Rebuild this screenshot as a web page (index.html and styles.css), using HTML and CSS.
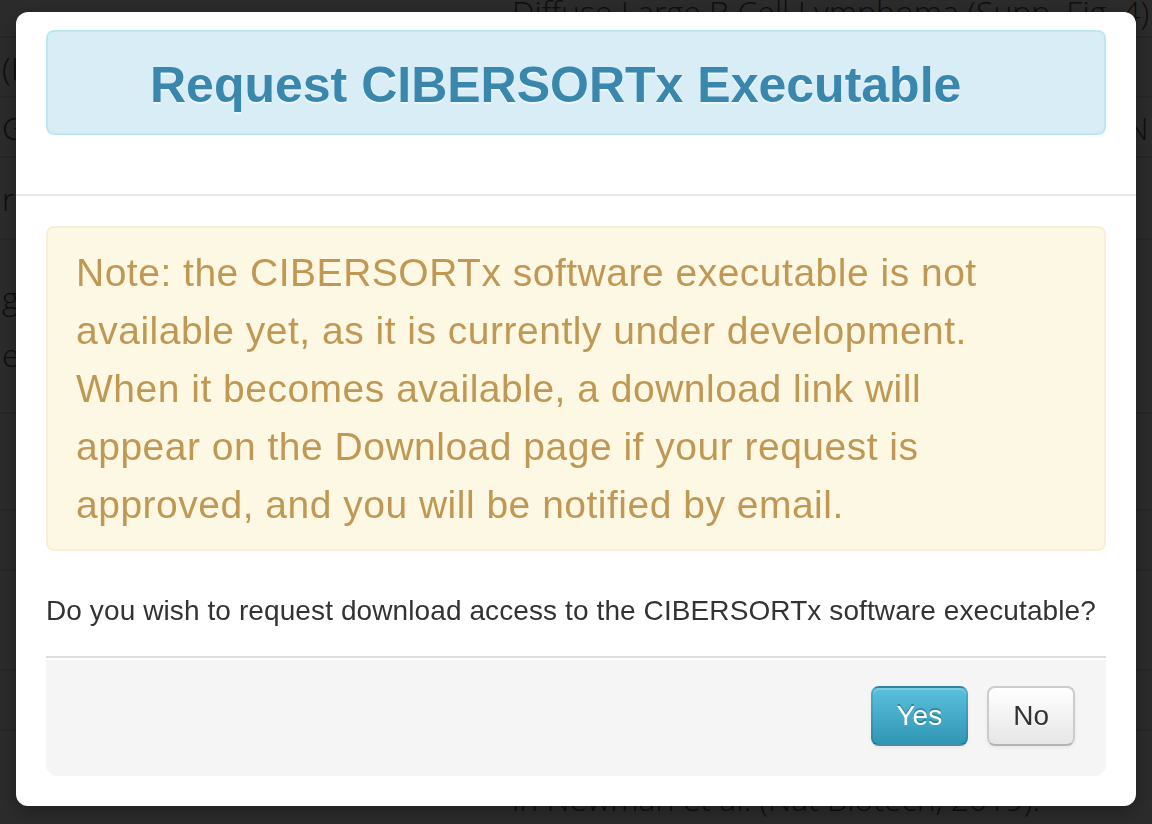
FILE: index.html
```html
<!DOCTYPE html>
<html lang="en">
<head>
<meta charset="utf-8">
<title>Request CIBERSORTx Executable</title>
<link rel="stylesheet" href="styles.css">
</head>
<body>
  <main class="page">
    <table class="sig-table">
      <tr class="r0"><td class="c-left"></td><td class="c-right">Diffuse Large B Cell Lymphoma (Supp. Fig. 4)</td></tr>
      <tr class="r1"><td class="c-left">(B cells)</td><td class="c-right">Purified B cells and T cells sorted from (l</td></tr>
      <tr class="r2"><td class="c-left">GEP</td><td class="c-right">Profiles of leukocyte subsets from tumors (N</td></tr>
      <tr class="r3"><td class="c-left">ribo</td><td class="c-right"></td></tr>
      <tr class="r4"><td class="c-left">grouped<br>expression</td><td class="c-right">Single cell RNA sequencing of melanoma tu<br>Bulk tissue samples with matched sorted n</td></tr>
      <tr class="r6"><td class="c-left">&nbsp;&nbsp;a</td><td class="c-right">Reference profiles of stromal cell types le</td></tr>
      <tr class="r7"><td class="c-left"></td><td class="c-right"></td></tr>
      <tr class="r8"><td class="c-left"></td><td class="c-right"></td></tr>
      <tr class="r9"><td class="c-left"></td><td class="c-right"></td></tr>
      <tr class="r11"><td class="c-left"></td><td class="c-right">in Newman et al. (Nat Biotech, 2019).</td></tr>
    </table>
  </main>

  <div class="backdrop"></div>

  <div class="modal" role="dialog" aria-labelledby="modal-title">
    <div class="modal-header">
      <div class="alert alert-info">
        <h1 id="modal-title" class="modal-title">Request CIBERSORTx Executable</h1>
      </div>
    </div>
    <div class="modal-body">
      <div class="alert alert-warning">
        Note: the CIBERSORTx software executable is not available yet, as it is currently under development. When it becomes available, a download link will appear on the Download page if your request is approved, and you will be notified by email.
      </div>
      <p class="question">Do you wish to request download access to the CIBERSORTx software executable?</p>
      <div class="modal-footer">
        <button class="btn btn-info" type="button">Yes</button>
        <button class="btn" type="button">No</button>
      </div>
    </div>
  </div>
</body>
</html>
```
FILE: styles.css
```css
html, body {
  margin: 0;
  padding: 0;
}

body {
  background: #ffffff;
  font-family: "Liberation Sans", Arial, Helvetica, sans-serif;
  color: #333333;
  width: 1152px;
  height: 824px;
  overflow: hidden;
}

/* ---------- page behind the dialog ---------- */
.page {
  font-family: "Open Sans", "Liberation Sans", sans-serif;
  font-weight: 300;
  color: #555555;
  height: 824px;
  overflow: hidden;
}

.sig-table {
  border-collapse: collapse;
  width: 1152px;
  margin-top: -14px;
  font-size: 32px;
}

.sig-table td {
  border-bottom: 2px solid #dddddd;
  padding: 0;
  white-space: nowrap;
  overflow: hidden;
  vertical-align: middle;
}

.c-left {
  width: 500px;
  padding-left: 2px !important;
}

.c-right {
  padding-left: 10px !important;
}

.r0 td { height: 50px; }
.r1 td { height: 58px; }
.r2 td { height: 58px; }
.r3 td { height: 80px; }
.r4 td { height: 172px; line-height: 57px; }
.r6 td { height: 95px; }
.r7 td { height: 58px; }
.r8 td { height: 98px; }
.r9 td { height: 58px; }
.r11 td {
  height: 44px;
  padding-top: 46px;
  vertical-align: top;
  border-bottom: none;
}

.backdrop {
  position: fixed;
  inset: 0;
  background: rgba(0, 0, 0, 0.83);
}

/* ---------- modal ---------- */
.modal {
  position: fixed;
  top: 12px;
  left: 16px;
  width: 1120px;
  background: #ffffff;
  border-radius: 12px;
  box-shadow: 0 6px 20px rgba(0, 0, 0, 0.3);
  overflow: hidden;
}

.modal-header {
  padding: 18px 30px 0;
  border-bottom: 2px solid #e9e9e9;
}

.alert {
  border-style: solid;
  border-width: 2px;
  border-radius: 8px;
}

.alert-info {
  background: #d9edf7;
  border-color: #bce8f1;
  padding: 18px 30px 13px 102px;
  margin-bottom: 59px;
}

.modal-title {
  margin: 0;
  font-size: 50px;
  line-height: 70px;
  font-weight: 700;
  color: #3a87ad;
  text-shadow: 0 2px 0 rgba(255, 255, 255, 0.5);
}

.modal-body {
  padding: 30px;
}

.alert-warning {
  background: #fcf8e3;
  border-color: #fbeed5;
  color: #c09853;
  padding: 16px 70px 15px 28px;
  font-size: 39px;
  line-height: 58px;
  letter-spacing: 0.5px;
  margin-bottom: 40px;
}

.question {
  margin: 0 0 25px;
  font-size: 28px;
  line-height: 40px;
  letter-spacing: 0.1px;
  color: #333333;
}

.modal-footer {
  display: flex;
  justify-content: flex-end;
  gap: 19px;
  background: #f5f5f5;
  border-top: 2px solid #dddddd;
  box-shadow: inset 0 2px 0 #ffffff;
  border-radius: 0 0 12px 12px;
  padding: 28px 31px 30px;
}

.btn {
  font-family: "Liberation Sans", Arial, Helvetica, sans-serif;
  font-size: 28px;
  line-height: 40px;
  height: 60px;
  padding: 8px 24px;
  border: 2px solid #cccccc;
  border-bottom-color: #b3b3b3;
  border-radius: 8px;
  color: #333333;
  background: linear-gradient(to bottom, #ffffff, #e6e6e6);
  text-shadow: 0 1px 1px rgba(255, 255, 255, 0.75);
  box-shadow: inset 0 2px 0 rgba(255, 255, 255, 0.2), 0 2px 4px rgba(0, 0, 0, 0.05);
  cursor: pointer;
}

.btn-info {
  color: #ffffff;
  background: linear-gradient(to bottom, #5bc0de, #2f96b4);
  border-color: rgba(0, 0, 0, 0.1) rgba(0, 0, 0, 0.1) rgba(0, 0, 0, 0.25);
  text-shadow: 0 -2px 0 rgba(0, 0, 0, 0.25);
}
```
